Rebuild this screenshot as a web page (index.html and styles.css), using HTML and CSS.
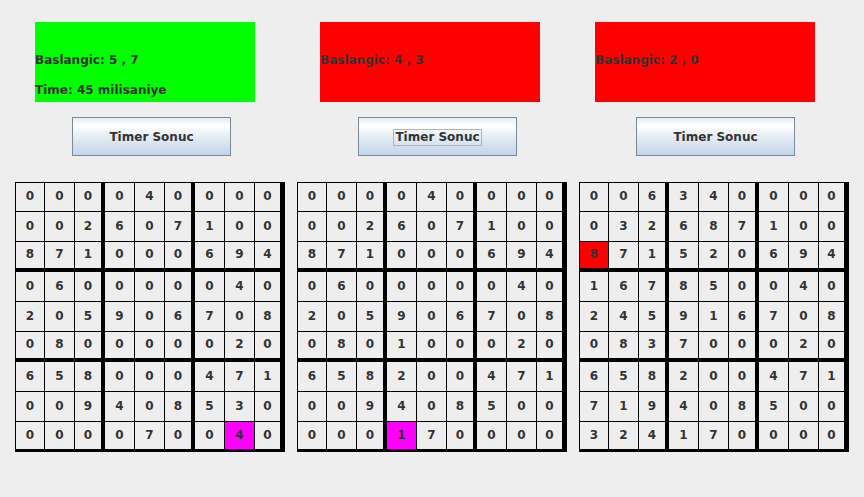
FILE: index.html
```html
<!DOCTYPE html>
<html>
<head>
<meta charset="utf-8">
<link rel="stylesheet" href="styles.css">
</head>
<body>
<main class="app">
  <section class="col col-1">
    <div class="panel panel-ok">
      <div class="line">Baslangic: 5 , 7</div>
      <div class="line">Time: 45 milisaniye</div>
    </div>
    <button class="btn"><span class="btn-label">Timer Sonuc</span></button>
    <div class="board">
      <span>0</span><span>0</span><span>0</span><span>0</span><span>4</span><span>0</span><span>0</span><span>0</span><span>0</span>
      <span>0</span><span>0</span><span>2</span><span>6</span><span>0</span><span>7</span><span>1</span><span>0</span><span>0</span>
      <span>8</span><span>7</span><span>1</span><span>0</span><span>0</span><span>0</span><span>6</span><span>9</span><span>4</span>
      <span>0</span><span>6</span><span>0</span><span>0</span><span>0</span><span>0</span><span>0</span><span>4</span><span>0</span>
      <span>2</span><span>0</span><span>5</span><span>9</span><span>0</span><span>6</span><span>7</span><span>0</span><span>8</span>
      <span>0</span><span>8</span><span>0</span><span>0</span><span>0</span><span>0</span><span>0</span><span>2</span><span>0</span>
      <span>6</span><span>5</span><span>8</span><span>0</span><span>0</span><span>0</span><span>4</span><span>7</span><span>1</span>
      <span>0</span><span>0</span><span>9</span><span>4</span><span>0</span><span>8</span><span>5</span><span>3</span><span>0</span>
      <span>0</span><span>0</span><span>0</span><span>0</span><span>7</span><span>0</span><span>0</span><span class="hl-magenta">4</span><span>0</span>
    </div>
  </section>

  <section class="col col-2">
    <div class="panel panel-fail">
      <div class="line">Baslangic: 4 , 3</div>
    </div>
    <button class="btn"><span class="btn-label focused">Timer Sonuc</span></button>
    <div class="board">
      <span>0</span><span>0</span><span>0</span><span>0</span><span>4</span><span>0</span><span>0</span><span>0</span><span>0</span>
      <span>0</span><span>0</span><span>2</span><span>6</span><span>0</span><span>7</span><span>1</span><span>0</span><span>0</span>
      <span>8</span><span>7</span><span>1</span><span>0</span><span>0</span><span>0</span><span>6</span><span>9</span><span>4</span>
      <span>0</span><span>6</span><span>0</span><span>0</span><span>0</span><span>0</span><span>0</span><span>4</span><span>0</span>
      <span>2</span><span>0</span><span>5</span><span>9</span><span>0</span><span>6</span><span>7</span><span>0</span><span>8</span>
      <span>0</span><span>8</span><span>0</span><span>1</span><span>0</span><span>0</span><span>0</span><span>2</span><span>0</span>
      <span>6</span><span>5</span><span>8</span><span>2</span><span>0</span><span>0</span><span>4</span><span>7</span><span>1</span>
      <span>0</span><span>0</span><span>9</span><span>4</span><span>0</span><span>8</span><span>5</span><span>0</span><span>0</span>
      <span>0</span><span>0</span><span>0</span><span class="hl-magenta">1</span><span>7</span><span>0</span><span>0</span><span>0</span><span>0</span>
    </div>
  </section>

  <section class="col col-3">
    <div class="panel panel-fail">
      <div class="line">Baslangic: 2 , 0</div>
    </div>
    <button class="btn"><span class="btn-label">Timer Sonuc</span></button>
    <div class="board">
      <span>0</span><span>0</span><span>6</span><span>3</span><span>4</span><span>0</span><span>0</span><span>0</span><span>0</span>
      <span>0</span><span>3</span><span>2</span><span>6</span><span>8</span><span>7</span><span>1</span><span>0</span><span>0</span>
      <span class="hl-red">8</span><span>7</span><span>1</span><span>5</span><span>2</span><span>0</span><span>6</span><span>9</span><span>4</span>
      <span>1</span><span>6</span><span>7</span><span>8</span><span>5</span><span>0</span><span>0</span><span>4</span><span>0</span>
      <span>2</span><span>4</span><span>5</span><span>9</span><span>1</span><span>6</span><span>7</span><span>0</span><span>8</span>
      <span>0</span><span>8</span><span>3</span><span>7</span><span>0</span><span>0</span><span>0</span><span>2</span><span>0</span>
      <span>6</span><span>5</span><span>8</span><span>2</span><span>0</span><span>0</span><span>4</span><span>7</span><span>1</span>
      <span>7</span><span>1</span><span>9</span><span>4</span><span>0</span><span>8</span><span>5</span><span>0</span><span>0</span>
      <span>3</span><span>2</span><span>4</span><span>1</span><span>7</span><span>0</span><span>0</span><span>0</span><span>0</span>
    </div>
  </section>
</main>
</body>
</html>
```

FILE: styles.css
```css
html, body {
  margin: 0;
  padding: 0;
  background: #eeeeee;
}

body {
  font-family: "DejaVu Sans", "Liberation Sans", sans-serif;
  font-weight: bold;
  font-size: 12px;
  color: #333333;
}

.app {
  display: flex;
  gap: 12px;
  padding: 22px 0 0 15px;
}

.col {
  width: 270px;
  display: flex;
  flex-direction: column;
  align-items: flex-start;
}

.panel {
  width: 220px;
  height: 80px;
  box-sizing: border-box;
  padding-top: 31px;
  display: flex;
  flex-direction: column;
  gap: 15px;
}

.line {
  line-height: 15px;
  white-space: nowrap;
}

.panel-ok { background: #00ff00; }
.panel-fail { background: #ff0000; }

.col-1 .panel { margin-left: 20px; }
.col-2 .panel { margin-left: 23px; }
.col-3 .panel { margin-left: 16px; }

.btn {
  margin-top: 15px;
  width: 159px;
  height: 39px;
  box-sizing: border-box;
  border: 1px solid #7a8a99;
  border-radius: 0;
  padding: 2px 0 0 0;
  background: linear-gradient(to bottom, #e6eef7 0%, #ffffff 22%, #e9f0f7 45%, #d3e1ee 75%, #c2d5e8 100%);
  font-family: inherit;
  font-weight: bold;
  font-size: 12px;
  color: #333333;
  display: flex;
  align-items: center;
  justify-content: center;
}

.col-1 .btn { margin-left: 57px; }
.col-2 .btn { margin-left: 61px; }
.col-3 .btn { margin-left: 57px; }

.btn-label {
  display: inline-block;
  line-height: 15px;
  padding: 0 1px;
  border: 1px solid transparent;
}

.btn-label.focused {
  border-color: #a3b8cc;
}

.board {
  margin-top: 26px;
  display: grid;
  grid-template-columns: repeat(9, 30px);
  grid-auto-rows: 30px;
}

.board > span {
  box-sizing: border-box;
  display: flex;
  align-items: center;
  justify-content: center;
  padding-bottom: 2px;
  background: #eeeeee;
  border-right: 1px solid #000;
  border-bottom: 1px solid #000;
  line-height: 14px;
}

.board > span:nth-child(9n+1) { border-left: 1px solid #000; }
.board > span:nth-child(-n+9) { border-top: 1px solid #000; }
.board > span:nth-child(3n) { border-right-width: 4px; }
.board > span:nth-child(9n) { border-right-width: 5px; }
.board > span:nth-child(n+19):nth-child(-n+27),
.board > span:nth-child(n+46):nth-child(-n+54) { border-bottom-width: 4px; }
.board > span:nth-child(n+73) { border-bottom-width: 3px; }

.board > span.hl-magenta { background: #ff00ff; }
.board > span.hl-red { background: #ff0000; }
```
